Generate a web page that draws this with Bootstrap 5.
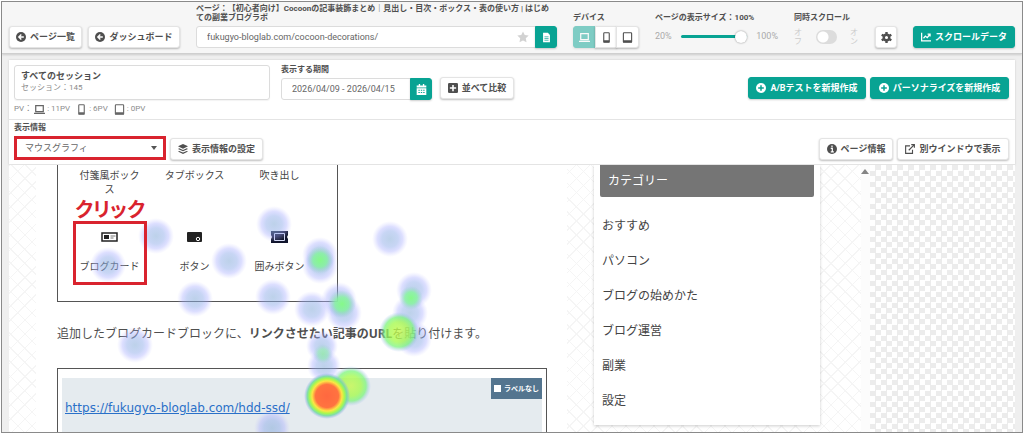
<!DOCTYPE html>
<html lang="ja">
<head>
<meta charset="utf-8">
<meta name="viewport" content="width=device-width, initial-scale=1">
<title>ヒートマップ</title>
<link rel="stylesheet" href="https://cdn.jsdelivr.net/npm/bootstrap@5.3.0/dist/css/bootstrap.min.css">
<style>
:root{--teal:#08a393;--ink:#4f4f4f;--soft:#8c8c8c}
html,body{height:100%}
body{font-family:Roboto,"Noto Sans CJK JP",sans-serif;font-size:9px;line-height:12px;color:var(--ink);background:#fff;padding:1px;overflow:hidden;text-spacing-trim:space-all}
.app-frame{height:100%;background:#efefef;border:1px solid #8a8a8a;overflow:hidden;display:flex;flex-direction:column}
.app-frame main{flex:1;min-height:0;display:flex;flex-direction:column}
.topbar{background:#f6f6f6;height:52px;padding:0 7px 5px;border-bottom:1px solid #cfcfcf;box-shadow:0 1px 2px rgba(0,0,0,.15)}
.btn{--bs-btn-font-size:9px;--bs-btn-font-weight:700;--bs-btn-line-height:12px;--bs-btn-padding-y:4px;--bs-btn-padding-x:6px;--bs-btn-border-radius:3px;height:22px;display:inline-flex;align-items:center;justify-content:center;gap:4px;white-space:nowrap}
.btn svg{width:10px;height:10px;flex:none}
.btn-plain{--bs-btn-bg:#fff;--bs-btn-color:#4f4f4f;--bs-btn-border-color:#e4e4e4;--bs-btn-hover-bg:#f4f4f4;--bs-btn-hover-color:#4f4f4f;box-shadow:0 1px 2px rgba(0,0,0,.25)}
.btn-teal{--bs-btn-bg:#08a393;--bs-btn-color:#fff;--bs-btn-border-color:#08a393;--bs-btn-hover-bg:#078e80;--bs-btn-hover-color:#fff;box-shadow:0 1px 2px rgba(0,0,0,.2)}
.btn-square{width:22px;padding:0}
.btn-square svg{width:11px;height:11px}
.caption-sm{font-size:8px;line-height:9px;font-weight:700;white-space:nowrap;display:block}
.form-control{font-size:9px;line-height:12px;height:22px;padding:4px 10px;border-color:#dcdcdc;border-radius:3px;color:#666;min-height:0}
.w-pages{width:73px}.w-dash{width:92px}.w-scroll{width:102px}.w-cmp{width:74px}.w-ab{width:118px}.w-pers{width:139px}.w-set{width:93px}.w-info{width:74px}.w-win{width:112px}
.nav-pair{gap:6px}
.url-title{height:22px}
.url-box{position:relative}
.url-box>svg{position:absolute;right:7px;top:5px;width:12px;height:12px;z-index:6}
.device-col{width:66px}.zoom-col{width:123px}.sync-col{width:65px}
input[type=range]{appearance:none;width:66px;height:12px;background:none;margin:0}
input[type=range]::-webkit-slider-runnable-track{height:3px;background:var(--teal);border-radius:2px}
input[type=range]::-webkit-slider-thumb{appearance:none;width:12px;height:12px;margin-top:-4px;border-radius:50%;background:#fff;box-shadow:0 0 2px rgba(0,0,0,.45)}
.ctl-row{height:22px;color:#aaa;font-size:9px}
.onoff{width:9px;font-size:8px;line-height:9px;color:#ccc}
.sync-switch{appearance:none;width:21px;height:14px;border-radius:7px;background:#dcdcdc radial-gradient(circle at 7px 7px,#fff 5px,transparent 6px);margin:0}
.panel{background:#fff;margin:6px 7px 0;box-shadow:0 0 2px rgba(0,0,0,.15)}
.row-session{height:60px;padding:5px 6px 0 5px;border-bottom:1px solid #e4e4e4}
.row-display{height:45px;padding:4px 6px 4px 5px;border-bottom:1px solid #e4e4e4}
.session-box{width:256px;height:35px;border:1px solid #dcdcdc;border-radius:3px;padding:4px 6px;box-shadow:0 1px 1px rgba(0,0,0,.05)}
.session-box small{font-size:8px;color:var(--soft);display:block}
.pv-line{font-size:8px;color:var(--soft);margin-top:3px;gap:2px}
.pv-line svg{width:11px;height:11px;color:#666}
.date-col{width:151px;margin-left:11px}
.form-select{width:152px;height:24px;border:3px solid #d9232e;border-radius:0;font-size:9px;line-height:12px;padding:3px 20px 3px 8px;background:#fff;color:#666}
.select-wrap{position:relative;width:152px}
.select-wrap::after{content:"";position:absolute;right:9px;top:10px;border:3px solid transparent;border-top:4px solid #555;border-bottom:0}
/* tracked site preview */
.preview{position:relative;flex:1;min-height:0;overflow:hidden;margin:0 7px;font-family:"Noto Sans","Noto Sans CJK JP",sans-serif;background:#fff}
.site{width:852px;padding-left:27px;background-color:#fff}
.hatch{background-image:repeating-linear-gradient(45deg,#f5f5f5 0 1px,transparent 1px 10px),repeating-linear-gradient(-45deg,#f5f5f5 0 1px,transparent 1px 10px)}
.article{width:531px;background:#fff;padding:0 20px 0 21px}
.block-box{width:281px;height:137px;border:1px solid #555;border-top:0;padding:3px 14px 0 9px;font-size:10px;line-height:14px;color:#444}
.tile{width:85px;height:55px}
.tile-lg{height:60px;padding-top:8px}
.tile-lg svg{width:17px;height:12px}
.click-mark{border:3px solid #d9232e;position:absolute;left:64px;top:56px;width:74px;height:64px}
.click-text{position:absolute;left:66px;top:34px;font:700 20px/20px "Noto Sans CJK JP",sans-serif;font-feature-settings:"palt";color:#d9232e}
.body-text{font-size:12px;line-height:20px;margin:22px 0 24px;white-space:nowrap}
.editor{border:1px solid #555;height:80px;padding:9px 4px 0}
.editor-in{background:#e5ebef;height:80px}
.tag{background:#54758f;color:#fff;font-size:7px;font-weight:700;height:21px;width:51px;gap:3px}
.tag input{appearance:none;width:7px;height:7px;background:#fff;margin:0}
.site-link{font-family:"DejaVu Sans","Noto Sans CJK JP",sans-serif;font-size:12px;line-height:18px;padding-left:3px;color:#2a70c8;display:inline-block}
.side{width:226px;height:260px;margin-left:27px;background:#fff;box-shadow:0 1px 3px rgba(0,0,0,.2);padding:0 6px}
.side h2{font-size:12px;line-height:32px;background:#757575;color:#fff;margin:0;padding-left:8px;border-radius:0 0 2px 2px;font-weight:400}
.side ul{padding:11px 0 0 2px}
.side a{font-size:12px;line-height:35px;color:#444;text-decoration:none;display:block;height:35px}
.scroll-col{width:9px;background:#fcfcfc}
.scroll-col::before{content:"";display:block;margin:4px 0 0 0;width:0;border:4px solid transparent;border-bottom:5px solid #858585;border-top:0}
.checker{background:repeating-conic-gradient(#ececec 0 25%,#fff 0 50%) 0 0/11px 11px}
.heat{position:absolute;left:0;top:0;width:100%;height:100%;pointer-events:none}
</style>
<script src="https://cdn.jsdelivr.net/npm/bootstrap@5.3.0/dist/js/bootstrap.bundle.min.js"></script>
</head>
<body>
<svg class="d-none">
<symbol id="i-left" viewBox="0 0 16 16"><circle cx="8" cy="8" r="8" fill="currentColor"/><path d="M12.500 8H5M8.500 4L4.500 8l4 4" stroke="#fff" stroke-width="2.200" fill="none"/></symbol>
<symbol id="i-plusc" viewBox="0 0 16 16"><circle cx="8" cy="8" r="8" fill="#fff"/><path d="M8 3.500v9M3.500 8h9" stroke="#08a393" stroke-width="2.400"/></symbol>
<symbol id="i-laptop" viewBox="0 0 16 16"><path d="M2.500 2.500h11v8.500h-11zM0 13.700h16" fill="none" stroke="currentColor" stroke-width="1.800"/></symbol>
<symbol id="i-phone" viewBox="0 0 16 16"><rect x="4" y="1" width="8" height="14" rx="1" fill="none" stroke="currentColor" stroke-width="1.600"/><path d="M4 12h8v3H4z" fill="currentColor"/></symbol>
<symbol id="i-tablet" viewBox="0 0 16 16"><rect x="2" y="1" width="12" height="14" rx="1" fill="none" stroke="currentColor" stroke-width="1.600"/><path d="M2 12h12v3H2z" fill="currentColor"/></symbol>
</svg>
<div class="app-frame">
<header class="topbar d-flex align-items-end flex-shrink-0">
  <div class="nav-pair d-flex me-3">
    <button class="btn btn-plain w-pages"><svg><use href="#i-left"/></svg>ページ一覧</button>
    <button class="btn btn-plain w-dash"><svg><use href="#i-left"/></svg>ダッシュボード</button>
  </div>
  <div class="flex-grow-1 me-3">
    <label class="caption-sm url-title" for="url">ページ：【初心者向け】Cocoonの記事装飾まとめ｜見出し・目次・ボックス・表の使い方 | はじめ<br>ての副業ブログラボ</label>
    <div class="input-group flex-nowrap">
      <div class="url-box flex-grow-1"><input id="url" class="form-control rounded-end-0" value="fukugyo-bloglab.com/cocoon-decorations/"><svg viewBox="0 0 16 16"><path fill="#d2d2d2" d="M8 .5l2.300 4.900 5.300.7-3.900 3.700 1 5.300L8 12.500l-4.700 2.600 1-5.300L.4 6.100l5.300-.7z"/></svg></div>
      <button class="btn btn-teal btn-square" aria-label="開く"><svg viewBox="0 0 16 16"><path fill="#fff" d="M3 1h7l3 3.500V15H3z"/><path d="M5 7h6M5 9.500h6M5 12h6" stroke="#08a393"/></svg></button>
    </div>
  </div>
  <div class="device-col me-3">
    <span class="caption-sm mb-1">デバイス</span>
    <div class="btn-group d-flex">
      <button class="btn btn-teal btn-square opacity-50" aria-label="PC"><svg><use href="#i-laptop"/></svg></button>
      <button class="btn btn-plain btn-square" aria-label="スマホ"><svg><use href="#i-phone"/></svg></button>
      <button class="btn btn-plain btn-square" aria-label="タブレット"><svg><use href="#i-tablet"/></svg></button>
    </div>
  </div>
  <div class="zoom-col me-3">
    <label class="caption-sm mb-1" for="zoom">ページの表示サイズ：100%</label>
    <div class="ctl-row d-flex justify-content-between pt-1"><span>20%</span><input id="zoom" type="range" value="100"><span>100%</span></div>
  </div>
  <div class="sync-col me-3">
    <label class="caption-sm mb-1" for="sync">同時スクロール</label>
    <div class="ctl-row d-flex justify-content-between align-items-center"><span class="onoff">オフ</span><input id="sync" type="checkbox" class="sync-switch"><span class="onoff">オン</span></div>
  </div>
  <button class="btn btn-plain btn-square me-3" aria-label="設定"><svg viewBox="0 0 16 16"><circle cx="8" cy="8" r="4" fill="none" stroke="currentColor" stroke-width="3.500"/><path d="M8 0v3M8 13v3M1 4l2.700 1.500M12.300 10.500L15 12M1 12l2.700-1.500M12.300 5.500L15 4" stroke="currentColor" stroke-width="3.500"/></svg></button>
  <button class="btn btn-teal w-scroll"><svg viewBox="0 0 16 16"><path d="M1 1v13h15M4 10l3-3.500 3 2.500 4-5M10.500 3.500H14.500V7" fill="none" stroke="#fff" stroke-width="2"/></svg>スクロールデータ</button>
</header>
<main>
<section class="panel flex-shrink-0">
  <div class="row-session d-flex">
    <div>
      <div class="session-box"><strong>すべてのセッション</strong><small>セッション：145</small></div>
      <div class="pv-line d-flex align-items-center">PV：<svg><use href="#i-laptop"/></svg><span>: 11PV</span>&nbsp;<svg><use href="#i-phone"/></svg><span>: 6PV</span>&nbsp;<svg><use href="#i-tablet"/></svg><span>: 0PV</span></div>
    </div>
    <div class="date-col">
      <label class="caption-sm mb-1" for="period">表示する期間</label>
      <div class="input-group flex-nowrap"><input id="period" class="form-control" value="2026/04/09 - 2026/04/15"><button class="btn btn-teal btn-square" aria-label="カレンダー"><svg viewBox="0 0 16 16"><path fill="#fff" d="M1 2h3V0h2v2h4V0h2v2h3v3H1zM1 6h14v10H1z"/><path d="M3.500 9h9M3.500 12.500h9" stroke="#08a393" stroke-width="1.500" stroke-dasharray="2 1.500"/></svg></button></div>
    </div>
    <div class="d-flex flex-grow-1 pt-2 mt-1 ms-2 gap-1">
      <button class="btn btn-plain w-cmp me-auto"><svg viewBox="0 0 16 16"><rect width="16" height="16" rx="2" fill="currentColor"/><path d="M8 3v10M3 8h10" stroke="#fff" stroke-width="2.500"/></svg>並べて比較</button>
      <button class="btn btn-teal w-ab"><svg><use href="#i-plusc"/></svg>A/Bテストを新規作成</button>
      <button class="btn btn-teal w-pers"><svg><use href="#i-plusc"/></svg>パーソナライズを新規作成</button>
    </div>
  </div>
  <div class="row-display d-flex align-items-end gap-1">
    <div>
      <label class="caption-sm mb-1" for="disp">表示情報</label>
      <div class="select-wrap"><select id="disp" class="form-select"><option>マウスグラフィ</option></select></div>
    </div>
    <button class="btn btn-plain w-set me-auto"><svg viewBox="0 0 16 16"><path fill="currentColor" d="M8 0l8 3.700-8 3.700L0 3.700zM2 6.800l6 2.700 6-2.700 2 1L8 11.500 0 7.800zM2 11l6 2.700 6-2.700 2 1-8 3.800L0 12z"/></svg>表示情報の設定</button>
    <button class="btn btn-plain w-info"><svg viewBox="0 0 16 16"><circle cx="8" cy="8" r="8" fill="currentColor"/><path d="M8 2.500v2.500M6 7h2.500v5M6 12.500h5" stroke="#fff" stroke-width="2" fill="none"/></svg>ページ情報</button>
    <button class="btn btn-plain w-win"><svg viewBox="0 0 16 16"><path d="M8 3H1v12h11V9M6 10l9-9M10 1h5v5" fill="none" stroke="currentColor" stroke-width="1.800"/></svg>別ウインドウで表示</button>
  </div>
</section>
<section class="preview d-flex">
  <div class="site hatch d-flex flex-shrink-0 align-items-start">
    <article class="article">
      <div class="block-box text-center">
        <div class="d-flex"><div class="tile px-2">付箋風ボックス</div><div class="tile">タブボックス</div><div class="tile">吹き出し</div></div>
        <div class="d-flex">
          <div class="tile tile-lg"><svg class="d-block mx-auto mb-3" viewBox="0 0 17 12"><path d="M1 2h15v8H1z" fill="#fff" stroke="#222" stroke-width="1.500"/><path d="M3 4h5v4H3z" fill="#222"/><path d="M9.500 5h5M9.500 7h3" stroke="#777"/></svg>ブログカード</div>
          <div class="tile tile-lg"><svg class="d-block mx-auto mb-3" viewBox="0 0 17 12"><rect x="1" y="1" width="15" height="10" rx="1" fill="#222"/><circle cx="12" cy="8" r="1.700" fill="none" stroke="#fff"/></svg>ボタン</div>
          <div class="tile tile-lg"><svg class="d-block mx-auto mb-3" viewBox="0 0 17 12"><path fill="#10142c" d="M0 0h17v4l-1 2 1 2v4H0V8l1-2-1-2z"/><path d="M3.500 2.500h10v7h-10z" fill="none" stroke="#d6dcf5"/></svg>囲みボタン</div>
        </div>
      </div>
      <p class="body-text">追加したブログカードブロックに、<b>リンクさせたい記事のURL</b>を貼り付けます。</p>
      <div class="editor"><div class="editor-in">
        <label class="tag d-flex align-items-center justify-content-center ms-auto"><input type="checkbox">ラベルなし</label>
        <a class="site-link" href="#">https://fukugyo-bloglab.com/hdd-ssd/</a>
      </div></div>
    </article>
    <aside class="side"><h2>カテゴリー</h2>
      <ul class="list-unstyled m-0"><li><a href="#">おすすめ</a></li><li><a href="#">パソコン</a></li><li><a href="#">ブログの始めかた</a></li><li><a href="#">ブログ運営</a></li><li><a href="#">副業</a></li><li><a href="#">設定</a></li></ul>
    </aside>
  </div>
  <div class="scroll-col flex-shrink-0"></div>
  <div class="checker flex-grow-1"></div>
  <svg class="heat">
    <defs>
      <radialGradient id="b"><stop offset="0" stop-color="#86acd8" stop-opacity=".55"/><stop offset=".45" stop-color="#90acea" stop-opacity=".5"/><stop offset=".7" stop-color="#a4aaff" stop-opacity=".38"/><stop offset="1" stop-color="#c0c0ff" stop-opacity="0"/></radialGradient>
      <radialGradient id="g"><stop offset="0" stop-color="#84fc84" stop-opacity=".95"/><stop offset=".5" stop-color="#84f79a" stop-opacity=".8"/><stop offset="1" stop-color="#9cc8d8" stop-opacity="0"/></radialGradient>
      <radialGradient id="y"><stop offset="0" stop-color="#c4f84c" stop-opacity=".8"/><stop offset=".5" stop-color="#a4fa4c" stop-opacity=".78"/><stop offset=".75" stop-color="#7cf57c" stop-opacity=".75"/><stop offset="1" stop-color="#a0b0ff" stop-opacity="0"/></radialGradient>
      <radialGradient id="r"><stop offset="0" stop-color="#ff6840"/><stop offset=".5" stop-color="#ff7340"/><stop offset=".65" stop-color="#fde545"/><stop offset=".76" stop-color="#a8f84e"/><stop offset=".86" stop-color="#75dca0" stop-opacity=".9"/><stop offset="1" stop-color="#9c9cff" stop-opacity="0"/></radialGradient>
    </defs>
    <g fill="url(#b)">
      <circle cx="147" cy="71" r="18"/><circle cx="99" cy="100" r="18"/><circle cx="265" cy="59" r="18"/><circle cx="220" cy="96" r="18"/><circle cx="186" cy="134" r="18"/><circle cx="264" cy="132" r="18"/><circle cx="381" cy="74" r="18"/><circle cx="126" cy="180" r="18"/><circle cx="263" cy="263" r="18"/>
      <circle cx="311" cy="90" r="18"/><circle cx="311" cy="101" r="18"/><circle cx="303" cy="144" r="18"/><circle cx="330" cy="135" r="18"/><circle cx="335" cy="148" r="18"/><circle cx="405" cy="125" r="18"/><circle cx="401" cy="148" r="18"/><circle cx="405" cy="174" r="18"/><circle cx="313" cy="181" r="16"/><circle cx="315" cy="201" r="17"/>
    </g>
    <g fill="url(#g)"><circle cx="311" cy="95" r="14"/><circle cx="333" cy="139" r="14"/><circle cx="402" cy="133" r="12"/><circle cx="314" cy="189" r="10" opacity=".6"/></g>
    <circle cx="390" cy="167" r="20" fill="url(#y)"/><circle cx="342" cy="221" r="20" fill="url(#y)"/><circle cx="318" cy="231" r="23" fill="url(#r)"/>
  </svg>
  <div class="click-mark"></div><div class="click-text">クリック</div>
</section>
</main>
</div>
</body>
</html>
